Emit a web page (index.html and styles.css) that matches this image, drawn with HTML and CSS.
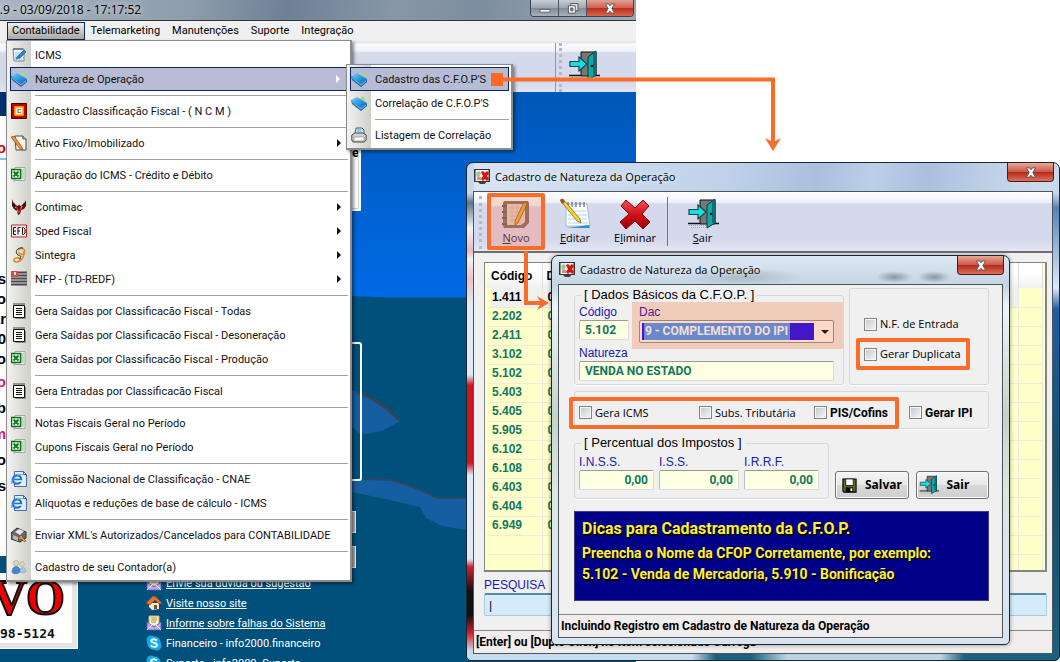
FILE: index.html
```html
<!DOCTYPE html>
<html lang="pt-BR">
<head>
<meta charset="utf-8">
<title>Cadastro de Natureza da Operação</title>
<link rel="stylesheet" href="styles.css">
</head>
<body>
<svg class="defs" aria-hidden="true">
  <defs>
    <linearGradient id="gb" x1="0" y1="0" x2="1" y2="1"><stop offset="0" stop-color="#7fd0f5"/><stop offset=".5" stop-color="#2b9be0"/><stop offset="1" stop-color="#0f5fb0"/></linearGradient>
    <linearGradient id="gr" x1="0" y1="0" x2="0" y2="1"><stop offset="0" stop-color="#f0525a"/><stop offset=".5" stop-color="#d01018"/><stop offset="1" stop-color="#a00008"/></linearGradient>
  </defs>
  <symbol id="note" viewBox="0 0 16 16"><path d="M2 2h11v12H3z" fill="#e9f6fb" stroke="#6b8a96"/><path d="M3 1v2M5 1v2M7 1v2M9 1v2M11 1v2" stroke="#446"/><path d="M4 6h6M4 8h5M4 10h5M4 12h7" stroke="#9cc8dc"/><path d="M6 10l7-7 2 2-6 6-4 1z" fill="#2f7fd0" stroke="#1a4f90" stroke-width=".6"/></symbol>
  <symbol id="book" viewBox="0 0 16 16"><path d="M9 4l2-3 3 2-1 5z" fill="#b5cf8c"/><path d="M0 5l6-3 10 6-6 5z" fill="url(#gb)"/><path d="M0 5l10 8 6-5v3l-6 5L1 9z" fill="#1769ae"/><path d="M1 7l9 7 5-4" fill="none" stroke="#cef" stroke-width=".6"/></symbol>
  <symbol id="ncm" viewBox="0 0 16 16"><path d="M.5.5h15v15H.5z" fill="#c00000" stroke="#4a0000"/><path d="M3.500 3.500h9v9h-9z" fill="#ffc21a" stroke="#ff8a00"/><path d="M5 5h6v6H5z" fill="#ececec"/><path d="M10 6.500H7v3h3" fill="none" stroke="#887" stroke-width="1.200"/></symbol>
  <symbol id="pen" viewBox="0 0 16 16"><path d="M4 1h8l3 3v11H5z" fill="#fbf6ee" stroke="#5a4636"/><path d="M12 1v3h3" fill="#d8c8b8" stroke="#5a4636"/><path d="M0 2l3-1 8 11 1 3-3-1z" fill="#e8924a" stroke="#8b4a1c" stroke-width=".7"/></symbol>
  <symbol id="xls" viewBox="0 0 16 16"><path d="M4 .5h10v13H4z" fill="#fff" stroke="#9aa89a"/><path d="M10 3h3M10 5h3M10 7h3M10 9h3M10 11h3" stroke="#7ab07a"/><path d="M.5 2.500h9v9h-9z" fill="#e9f5e9" stroke="#0b6a12" stroke-width="1.400"/><path d="M2.500 4.500l5 5M7.500 4.500l-5 5" stroke="#0b7a16" stroke-width="1.900"/><path d="M3 12v3" stroke="#9aa89a"/></symbol>
  <symbol id="bird" viewBox="0 0 16 16"><path d="M1 0l1 3 4 4 2-1 2 1 4-4 1-2v6l-2 3-3 1-1 4-2 1-1-4-3-2-2-3z" fill="#4a1010"/><path d="M4 6l3 3 1 4 1-4 3-3-1 4-3 5-2-4z" fill="#d02a20"/><path d="M6 11l1 2M10 9l1-2M4 8l1 1" stroke="#e8a040"/></symbol>
  <symbol id="efd" viewBox="0 0 16 16"><path d="M.5 2h15v12H.5z" fill="#f6eeee" stroke="#c02020"/><path d="M5 4.500H2.500v7H5M2.500 8H5M9.500 4.500H7v7M7 8h2M11.500 4.500v7h1l1.500-1.500v-4l-1.500-1.500z" fill="none" stroke="#111"/></symbol>
  <symbol id="sint" viewBox="0 0 16 16"><path d="M7 3c4-3 8-1 6 3-1 3-5 1-5-1" fill="none" stroke="#e08a2a" stroke-width="1.600"/><path d="M13 4c1 5-3 11-7 11-4 0-4-3-1-4 3-1 5 1 3 3" fill="none" stroke="#e08a2a" stroke-width="1.600"/><path d="M12 1c-5-1-8 3-6 6s5 0 3 5" fill="none" stroke="#3a2410" stroke-width="1"/></symbol>
  <symbol id="nfp" viewBox="0 0 16 16"><path d="M0 1.500h16M0 4.500h16M0 7.500h16M0 10.500h16M0 13.500h16" stroke="#4e4650" stroke-width="1.800"/><path d="M0 0h7v6H0z" fill="#d84a48"/><path d="M3 1h2v3H3z" fill="#f8dcd8"/></symbol>
  <symbol id="pad" viewBox="0 0 16 16"><path d="M2.500 2.500h11v12h-11z" fill="#fff" stroke="#111"/><path d="M14.500 4v11.500H4" fill="none" stroke="#777" stroke-width=".8"/><path d="M3 0v3M5 0v3M7 0v3M9 0v3M11 0v3M13 0v3" stroke="#222" stroke-width=".8"/><path d="M5 5.500h6M5 7.500h6M5 9.500h6M5 11.500h6" stroke="#111"/></symbol>
  <symbol id="ie" viewBox="0 0 16 16"><path d="M3.500.5h9l3 3v12h-12z" fill="#e3ecfb" stroke="#4a6ab8"/><path d="M12.500.5v3h3" fill="none" stroke="#4a6ab8"/><circle cx="6" cy="8.500" r="4.200" fill="#dff0fb" stroke="#1976c8" stroke-width="2.200"/><path d="M3 8.500h7" stroke="#1976c8" stroke-width="1.600"/><path d="M8 10h3" stroke="#e3ecfb" stroke-width="1.600"/><path d="M1 13c-3-3 8-12 11-9" fill="none" stroke="#58a6e4"/></symbol>
  <symbol id="xml" viewBox="0 0 16 16"><path d="M0 6l6-5 9 4v6l-6 4-9-3z" fill="#6a6a6e" stroke="#303034"/><path d="M4 5l4-3 5 2-4 4z" fill="#e6e6ea"/><path d="M2 8l5 2v4l-5-2z" fill="#b8b8c0"/><path d="M9 9l2-1 1 3 3 3-1 1-4-3-3 1z" fill="#e8a03a" stroke="#5a3a10" stroke-width=".5"/></symbol>
  <symbol id="users" viewBox="0 0 16 16"><circle cx="5" cy="4" r="2.800" fill="#d8d8c0" stroke="#a0a088" stroke-width=".5"/><circle cx="11" cy="5" r="2.500" fill="#d8d8c0" stroke="#a0a088" stroke-width=".5"/><path d="M8 13c0-5 7-6 7-1 0 2-4 2-7 1z" fill="#a8c8e8" stroke="#6a92ba" stroke-width=".5"/><path d="M1 13c0-7 8-7 8-1 0 3-7 4-8 1z" fill="#4a86c8" stroke="#2f62a0" stroke-width=".5"/></symbol>
  <symbol id="print" viewBox="0 0 16 16"><path d="M4 7l1-6h6l2 2v4" fill="#d8ecfa" stroke="#49606e"/><path d="M.8 8l3-2h8l3.400 2v5l-2 2H2l-1.200-2z" fill="#d2d2d2" stroke="#4a4a4a"/><path d="M3 10h10v4H3z" fill="#fff" stroke="#777" stroke-width=".6"/><path d="M6 3h4M6 5h5" stroke="#5aa0cc"/></symbol>
  <symbol id="door" viewBox="0 0 32 32"><path d="M13 2h15v24H13z" fill="#777" stroke="#111"/><path d="M1 25.500h12M28 25.500h4" stroke="#111" stroke-width="1.500"/><path d="M2 27.500h24M4 29.500h18" stroke="#aaa" stroke-dasharray="1 1"/><path d="M20 7l8-6v24l-8 5z" fill="#12a8a8" stroke="#053f3f"/><path d="M26 3v22" stroke="#0b7070" stroke-width="2"/><circle cx="24" cy="16" r="1.300" fill="#000"/><path d="M2 11.500h9V7l8 7-8 7v-4.500H2z" fill="#20dce0" stroke="#064a4a" stroke-width="1.200"/></symbol>
  <symbol id="notebook" viewBox="0 0 32 32"><path d="M4 3h24l1 2v20l-5 5H4l-1-2V5z" fill="#9a6f60"/><path d="M7 6h18v18l-4 3H7z" fill="#e8b9a4"/><path d="M9 10h13M9 14h13M9 18h11M9 22h9M12 7v18M17 7v18" stroke="#d8a892"/><path d="M2 8h5M2 14h5M2 20h5M2 26h5" stroke="#8a6050" stroke-width="2"/><path d="M24 4l3 2-9 19-3 2v-4z" fill="#f09a3a" stroke="#a0602a" stroke-width=".8"/></symbol>
  <symbol id="edit" viewBox="0 0 32 32"><path d="M7 6h21l3 22H7z" fill="#f8fbff" stroke="#a9bdd4"/><path d="M9 4v5M13 4v5M17 4v5M21 4v5M25 4v5" stroke="#555" stroke-width="1"/><path d="M9 13h18M9 17h19M9 21h19M9 25h20" stroke="#bcd6ee"/><path d="M8 30h23l-1-3z" fill="#2f8ed0"/><path d="M1 2l3-1 17 20 1 4-4-2z" fill="#f6d23a" stroke="#8a6a10" stroke-width=".8"/><path d="M1 2l3-1 2 3-3 2z" fill="#a05030"/></symbol>
  <symbol id="kill" viewBox="0 0 32 32"><path d="M7 2l9 8 8-8 6 6-7 8 8 8-7 7-8-8-9 8-6-7 9-8-8-8z" fill="url(#gr)" stroke="#8a0008" stroke-linejoin="round"/></symbol>
  <symbol id="app" viewBox="0 0 16 16"><path d="M0 0h16v13H0z" fill="#333"/><path d="M1.500 1h13v11h-13z" fill="#f3f3ee"/><path d="M2 4l3-2 2 2-2 5H3z" fill="#9cc89c"/><path d="M3 8h4v3H3z" fill="#e08a8a"/><path d="M7 3l2-1 2 2 2-2 2 2-2 3 2 3-2 2-2-2-2 2-2-2 2-3z" fill="#d81010"/><path d="M4 13h8l-1 2H6z" fill="#444"/></symbol>
  <symbol id="disk" viewBox="0 0 16 16"><path d="M1 1h14v14H2l-1-1z" fill="#6b6b20" stroke="#000" stroke-width="1.200"/><path d="M4 1h8v7H4z" fill="#fff" stroke="#000" stroke-width=".8"/><path d="M4 10h8v5H4z" fill="#000"/><path d="M9 11h2v3H9z" fill="#fff"/></symbol>
  <symbol id="mail" viewBox="0 0 16 16"><path d="M3 1h10v10H3z" fill="#fff7cc" stroke="#c8b060"/><path d="M5 3h6M5 5h6M5 7h5" stroke="#a09050"/><path d="M1 7l7 5 7-5v8H1z" fill="#b9a9ee" stroke="#6a58b8" stroke-width=".8"/><path d="M1 15l5-5M15 15l-5-5" stroke="#eee6ff"/></symbol>
  <symbol id="home" viewBox="0 0 16 16"><path d="M3 8h10v6l-7 1-3-3z" fill="#f6ead0"/><path d="M0 8l7-7 3 1 6 6-3 1-4-4-5 5z" fill="#e8702a" stroke="#a03c10" stroke-width=".5"/><path d="M8 10h3v4H8z" fill="#8a4a28"/></symbol>
  <symbol id="skype" viewBox="0 0 16 16"><circle cx="5" cy="5" r="4.500" fill="#0aa6e4"/><circle cx="11" cy="11" r="4.500" fill="#0aa6e4"/><circle cx="8" cy="8" r="6.800" fill="#12aeea"/><path d="M11 5.500C9 3.500 5 4 5.200 6.200 5.400 8.500 11 7.500 11 10c0 2.300-4.500 2.500-6.200.3" fill="none" stroke="#fff" stroke-width="1.800"/></symbol>
  <symbol id="arrow" viewBox="0 0 4 8"><path d="M0 0l4 4-4 4z" fill="currentColor"/></symbol>
</svg>

<main class="desktop">
  <section class="erp">
    <header class="erp-title"><span>3.9 - 03/09/2018 - 17:17:52</span>
      <div class="caption">
        <button class="cap cap-min" aria-label="Minimizar"><svg viewBox="0 0 12 12"><path d="M.5 7h11v3H.5z" fill="#fff" stroke="#555"/></svg></button>
        <button class="cap" aria-label="Restaurar"><svg viewBox="0 0 12 12"><path d="M3.500.5h8v8h-8z" fill="#ddd" stroke="#555"/><path d="M1 3h7.500v8H1z" fill="#fff" stroke="#555"/><path d="M3.500 5.500h2.500v3H3.500z" fill="#888" stroke="#555"/></svg></button>
        <button class="cap cap-close" aria-label="Fechar"><svg viewBox="0 0 12 12"><path d="M1 1h3.500L6 3l1.500-2H11L8 6l3 5H7.500L6 9l-1.500 2H1l3-5z" fill="#fff" stroke="#555"/></svg></button>
      </div>
    </header>
    <nav class="menubar">
      <button class="open">Contabilidade</button><button>Telemarketing</button><button>Manutenções</button><button>Suporte</button><button>Integração</button>
    </nav>
    <div class="erp-tools"><button class="exit" aria-label="Sair"><svg><use href="#door"/></svg></button></div>
    <div class="wall">
      <svg class="land" viewBox="0 0 290 300" preserveAspectRatio="none"><path d="M0 0q60 2 114 6h176v294H0z" fill="#00507c"/><path d="M0 94l20 8 14 10 14 13-16 9-16 4-9-1-7-6z" fill="#165ea2"/><path d="M4 96l14 5 16 11 13 12" fill="none" stroke="#37444e" stroke-width="3"/><path d="M0 184l42 0 24 9 20 9h34v33l-30-5-16-8-6-11-30-7-38-8z" fill="#165ea2"/><path d="M14 183l26 1 24 8 22 10h34" fill="none" stroke="#2c4860" stroke-width="2"/></svg>
      <div class="sheet"></div>
      <div class="panel-a">e</div>
      <div class="panel-b"></div>
      <div class="stub stub-1"></div><div class="stub stub-2"></div>
      <div class="scraps"><b class="red">o</b><i></i><b>as</b><b>o</b><b>ar</b><b>40</b><b>o</b><b class="pink">lo</b><b>ub</b><b class="pink">m</b><b>o</b><b>s</b></div>
      <div class="brand"><strong>VO</strong><span>98-5124</span></div>
      <ul class="links">
        <li><svg><use href="#mail"/></svg><a href="#">Envie sua dúvida ou sugestão</a></li>
        <li><svg><use href="#home"/></svg><a href="#">Visite nosso site</a></li>
        <li><svg><use href="#mail"/></svg><a href="#">Informe sobre falhas do Sistema</a></li>
        <li><svg><use href="#skype"/></svg><span>Financeiro - info2000.financeiro</span></li>
        <li><svg><use href="#skype"/></svg><span>Suporte - info2000. Suporte</span></li>
      </ul>
    </div>
  </section>

  <div class="menu menu-main">
    <button><svg><use href="#note"/></svg>ICMS</button>
    <button class="hot"><svg><use href="#book"/></svg>Natureza de Operação<svg class="more"><use href="#arrow"/></svg></button>
    <hr>
    <button><svg><use href="#ncm"/></svg>Cadastro Classificação Fiscal - ( N C M )</button>
    <hr>
    <button><svg><use href="#pen"/></svg>Ativo Fixo/Imobilizado<svg class="more"><use href="#arrow"/></svg></button>
    <hr>
    <button><svg><use href="#xls"/></svg>Apuração do ICMS - Crédito e Débito</button>
    <hr>
    <button><svg><use href="#bird"/></svg>Contimac<svg class="more"><use href="#arrow"/></svg></button>
    <button><svg><use href="#efd"/></svg>Sped Fiscal<svg class="more"><use href="#arrow"/></svg></button>
    <button><svg><use href="#sint"/></svg>Sintegra<svg class="more"><use href="#arrow"/></svg></button>
    <button><svg><use href="#nfp"/></svg>NFP - (TD-REDF)<svg class="more"><use href="#arrow"/></svg></button>
    <hr>
    <button><svg><use href="#pad"/></svg>Gera Saídas por Classificacão Fiscal - Todas</button>
    <button><svg><use href="#pad"/></svg>Gera Saídas por Classificacão Fiscal - Desoneração</button>
    <button><svg><use href="#xls"/></svg>Gera Saídas por Classificacão Fiscal - Produção</button>
    <hr>
    <button><svg><use href="#pad"/></svg>Gera Entradas por Classificacão Fiscal</button>
    <hr>
    <button><svg><use href="#xls"/></svg>Notas Fiscais Geral no Período</button>
    <button><svg><use href="#xls"/></svg>Cupons Fiscais Geral no Período</button>
    <hr>
    <button><svg><use href="#ie"/></svg>Comissão Nacional de Classificação - CNAE</button>
    <button><svg><use href="#ie"/></svg>Alíquotas e reduções de base de cálculo - ICMS</button>
    <hr>
    <button><svg><use href="#xml"/></svg>Enviar XML's Autorizados/Cancelados para CONTABILIDADE</button>
    <hr>
    <button><svg><use href="#users"/></svg>Cadastro de seu Contador(a)</button>
  </div>
  <div class="menu menu-sub">
    <button class="hot"><svg><use href="#book"/></svg>Cadastro das C.F.O.P'S</button>
    <button><svg><use href="#book"/></svg>Correlação de C.F.O.P'S</button>
    <hr>
    <button><svg><use href="#print"/></svg>Listagem de Correlação</button>
  </div>

  <section class="win win-list">
    <header class="win-title"><svg><use href="#app"/></svg><h2>Cadastro de Natureza da Operação</h2><button class="x" aria-label="Fechar"><svg viewBox="0 0 12 12"><path d="M1 1h3.500L6 3l1.500-2H11L8 6l3 5H7.500L6 9l-1.500 2H1l3-5z" fill="#fff" stroke="#555"/></svg></button></header>
    <div class="client">
      <div class="tools">
        <button class="marked"><svg><use href="#notebook"/></svg><span><u>N</u>ovo</span></button>
        <button><svg><use href="#edit"/></svg><span><u>E</u>ditar</span></button>
        <button><svg><use href="#kill"/></svg><span>E<u>l</u>iminar</span></button>
        <button class="split"><svg><use href="#door"/></svg><span><u>S</u>air</span></button>
      </div>
      <div class="list-body">
        <div class="grid">
          <table>
            <colgroup><col class="c-code"><col><col class="c-end"></colgroup>
            <thead><tr><th>Código</th><th>D</th><th></th></tr></thead>
            <tbody>
              <tr class="sel"><td>1.411</td><td>0</td><td></td></tr>
              <tr><td>2.202</td><td>0</td><td></td></tr>
              <tr><td>2.411</td><td>0</td><td></td></tr>
              <tr><td>3.102</td><td>0</td><td></td></tr>
              <tr><td>5.102</td><td>0</td><td></td></tr>
              <tr><td>5.403</td><td>0</td><td></td></tr>
              <tr><td>5.405</td><td>0</td><td></td></tr>
              <tr><td>5.905</td><td>0</td><td></td></tr>
              <tr><td>6.102</td><td>0</td><td></td></tr>
              <tr><td>6.108</td><td>0</td><td></td></tr>
              <tr><td>6.403</td><td>0</td><td></td></tr>
              <tr><td>6.404</td><td>0</td><td></td></tr>
              <tr><td>6.949</td><td>0</td><td></td></tr>
              <tr><td></td><td></td><td></td></tr>
              <tr><td></td><td></td><td></td></tr>
            </tbody>
          </table>
        </div>
        <label class="lbl" for="q">PESQUISA</label>
        <input id="q" class="search" type="text" value="|">
      </div>
      <footer class="status">[Enter] ou [Duplo Click] no Item selecionado Carrega</footer>
    </div>
  </section>

  <section class="win win-form">
    <header class="win-title"><svg><use href="#app"/></svg><h2>Cadastro de Natureza da Operação</h2><button class="x" aria-label="Fechar"><svg viewBox="0 0 12 12"><path d="M1 1h3.500L6 3l1.500-2H11L8 6l3 5H7.500L6 9l-1.500 2H1l3-5z" fill="#fff" stroke="#555"/></svg></button></header>
    <form class="client">
      <div class="form-body">
        <div class="row">
          <fieldset class="basic">
            <legend>[ Dados Básicos da C.F.O.P. ]</legend>
            <div class="pair">
              <div class="field code"><label class="lbl" for="cod">Código</label><input id="cod" type="text" value="5.102"></div>
              <div class="field dac"><label class="lbl" for="dac">Dac</label><div class="combo"><select id="dac"><option>9 - COMPLEMENTO DO IPI</option></select></div></div>
            </div>
            <div class="field nat"><label class="lbl" for="nat">Natureza</label><input id="nat" type="text" value="VENDA NO ESTADO"></div>
          </fieldset>
          <div class="box flags">
            <label class="chk"><input type="checkbox">N.F. de Entrada</label>
            <label class="chk marked"><input type="checkbox">Gerar Duplicata</label>
          </div>
        </div>
        <div class="box taxes">
          <div class="marked">
            <label class="chk"><input type="checkbox">Gera ICMS</label>
            <label class="chk"><input type="checkbox">Subs. Tributária</label>
            <label class="chk strong"><input type="checkbox">PIS/Cofins</label>
          </div>
          <label class="chk strong"><input type="checkbox">Gerar IPI</label>
        </div>
        <div class="row">
          <fieldset class="perc">
            <legend>[ Percentual dos Impostos ]</legend>
            <div class="field"><label class="lbl" for="inss">I.N.S.S.</label><input id="inss" class="num" type="text" value="0,00"></div>
            <div class="field"><label class="lbl" for="iss">I.S.S.</label><input id="iss" class="num" type="text" value="0,00"></div>
            <div class="field"><label class="lbl" for="irrf">I.R.R.F.</label><input id="irrf" class="num" type="text" value="0,00"></div>
          </fieldset>
          <div class="actions">
            <button type="button"><svg><use href="#disk"/></svg>Salvar</button>
            <button type="button"><svg class="wide"><use href="#door"/></svg>Sair</button>
          </div>
        </div>
        <aside class="tips">
          <h3>Dicas para Cadastramento da C.F.O.P.</h3>
          <p>Preencha o Nome da CFOP Corretamente, por exemplo:</p>
          <p>5.102 - Venda de Mercadoria, 5.910 - Bonificação</p>
        </aside>
      </div>
      <footer class="status">Incluindo Registro em Cadastro de Natureza da Operação</footer>
    </form>
  </section>

  <svg class="callout callout-top" viewBox="0 0 290 80"><path d="M6 8.500H282V72" fill="none" stroke="#f96d2b" stroke-width="4"/><path d="M0 2h12v13H0z" fill="#ff6a22"/><path d="M274 67l8 4 8-4-8 13z" fill="#f96d2b"/></svg>
  <svg class="callout callout-new" viewBox="0 0 30 56"><path d="M4 0V52H20" fill="none" stroke="#f96d2b" stroke-width="4"/><path d="M15 45l12 7-12 7 4-7z" fill="#f96d2b"/></svg>
</main>
</body>
</html>
```
FILE: styles.css
```css
* { box-sizing: border-box; }
body { margin: 0; background: #fff; font-family: Roboto, "Liberation Sans", sans-serif; font-size: 11px; color: #000; }
button, input, select { font: inherit; color: inherit; margin: 0; }
button { background: none; border: 0; padding: 0; text-align: left; }
.defs { position: absolute; width: 0; height: 0; }
.desktop { position: relative; min-height: 100vh; overflow: hidden; }

/* main application */
.erp { width: 60%; height: 100vh; display: flex; flex-direction: column; overflow: hidden; }
.erp-title { height: 21px; flex: none; display: flex; justify-content: space-between; align-items: flex-start; border-bottom: 1px solid #333; background: linear-gradient(100deg, #a9b4c0 0, #8d9dac 30%, #6d8196 45%, #8797a8 62%, #7d8ea0 75%, #9aa8b6 100%); font: 12px/19px "Open Sans", sans-serif; }
.erp-title span { margin-left: -7px; text-shadow: 0 0 6px #fff; }
.caption { display: flex; margin-right: 2px; border: 1px solid #3d4650; border-top: 0; border-radius: 0 0 4px 4px; overflow: hidden; }
.cap { width: 28px; height: 16px; display: grid; place-items: center; border-right: 1px solid #4c5560; background: linear-gradient(#c8cfd6, #9aa5b0 50%, #7f8c98 51%, #a5b0ba); }
.cap svg, .x svg { width: 12px; height: 11px; }
.cap-close { width: 46px; border: 0; background: linear-gradient(#e3a294, #cf6250 48%, #b92c18 50%, #d8644c); }
.menubar { height: 20px; flex: none; display: flex; background: #f0f0f0; padding-left: 7px; }
.menubar button { height: 18px; line-height: 18px; margin: 1px 4px 0 0; padding: 0 4px; }
.menubar .open { border: 1px solid #0a246a; line-height: 16px; margin-right: 2px; background: linear-gradient(#f0efec, #aaa89c); }
.erp-tools { height: 51px; flex: none; padding: 2px 36px 0 0; display: flex; justify-content: flex-end; background: linear-gradient(#e8e8e8 0 2px, #fafbff 3px, #f0f2fa 10px, #d4d9ec 12px, #d4d9ec 80%, #e0e4f4); }
.exit { border-left: 1px solid #999; padding-left: 9px; display: flex; align-items: center; }
.exit::before { content: ""; height: 100%; border-left: 3px dotted #b4b8c8; margin: 0 6px 0 -6px; }
.exit svg { width: 32px; height: 32px; margin-bottom: 4px; }
.wall { position: relative; flex: 1; overflow: hidden; background: linear-gradient(#0058b8, #006ae6 205px, #00507c 206px); }
.land { position: absolute; left: 352px; top: 204px; width: 290px; height: 300px; }
.sheet { position: absolute; left: 0; top: 0; width: 7px; height: 464px; background: linear-gradient(#003070 24px, #fff 24px); }
.panel-a { position: absolute; left: 340px; top: 50px; width: 21px; height: 69px; padding-left: 10px; background: #fff; border: 2px solid #fff; outline: 1px solid #bdd4e8; outline-offset: -3px; font-size: 13px; font-weight: bold; line-height: 18px; }
.panel-b { position: absolute; left: 300px; top: 250px; width: 62px; height: 139px; border: 2px solid #fff; border-radius: 3px; }
.stub { position: absolute; left: 340px; width: 16px; height: 22px; background: #b4b4b4; border: 1px solid #eee; }
.stub-1 { top: 419px; }
.stub-2 { top: 454px; }
.scraps { position: absolute; left: 0; top: 46px; width: 6px; display: flex; flex-direction: column; align-items: flex-end; font: 15px/20px "Liberation Sans", sans-serif; overflow: hidden; }
.scraps i { width: 6px; height: 111px; border-top: 2px solid #7ac4f0; }
.scraps .red { color: #e00000; }
.scraps .pink { color: #d0207c; }
.scraps b:nth-child(n+8) { line-height: 26px; }
.brand { position: absolute; left: 0; top: 482px; width: 77px; height: 74px; background: #fff; border: solid #e4e4e4; border-width: 0 5px 5px 0; outline: 1px solid #fff; font-family: "DejaVu Sans Mono", monospace; }
.brand strong { display: block; margin-left: -9px; font: bold 50px/46px "Liberation Serif", serif; color: #f00000; -webkit-text-stroke: 2px #111; }
.brand span { display: block; font-size: 13px; font-weight: bold; line-height: 28px; color: #111; }
.links { position: absolute; left: 146px; top: 481px; margin: 0; padding: 0; list-style: none; color: #fff; }
.links li { display: flex; align-items: center; gap: 4px; height: 20px; white-space: nowrap; }
.links svg { width: 16px; height: 16px; }
.links a { color: #fff; }

/* drop-down menus */
.menu { position: absolute; display: flex; flex-direction: column; border: 1px solid #8c8c8c; border-width: 1px 2px 2px 1px; background: linear-gradient(90deg, #f2f2f0, #cfd0c8 24px, #fff 24px); padding: 2px 2px 1px; box-shadow: 2px 2px 3px rgba(0, 0, 0, .45); }
.menu-main { left: 6px; top: 40px; width: 346px; }
.menu-sub { left: 346px; top: 64px; width: 167px; }
.menu button { display: flex; align-items: center; height: 24px; padding: 0 0 0 2px; white-space: nowrap; color: #111; }
.menu button > svg:first-child { width: 16px; height: 16px; margin-right: 8px; flex: none; }
.menu .hot { background: #b5bcd4; border: 1px solid #0a246a; margin-left: 1px; padding-left: 0; }
.menu hr { width: auto; height: 1px; margin: 4px 0 3px 26px; border: 0; background: #a2a2a2; }
.menu .more { width: 4px; height: 8px; margin: 0 7px 0 auto; }
.menu .hot .more { color: #fff; }

/* glass windows */
.win { position: absolute; border: 1px solid #1c2630; border-radius: 7px 7px 5px 5px; padding: 0 6px 6px; display: flex; flex-direction: column; }
.win-list { left: 466px; right: 0; top: 162px; bottom: 1px; background:
  linear-gradient(#c8d8ec 30px, #5c7490 40px, #eef4fb 65px, #e8b8c0 88px, #eef4fb 96px, #e8c0c8 116px, #dceafa 140px, #dceafa 212px, #c81820 222px, #c81820 300px, #dceafa 312px, #dceafa 396px, #d02028 404px, #101014 428px, #101014 452px, #d02028 470px, #c8dcf0 488px) left / 7px 100% no-repeat,
  linear-gradient(#c8d8ec 30px, #5484b8 45px, #dceafa 125px, #1a60a8 146px, #10506c 300px, #1a6080) right / 7px 100% no-repeat,
  linear-gradient(90deg, #c8dcf0 38%, #1a6080 42% 48%, #b8d4e4 54% 80%, #1a6080 84%) bottom / 100% 7px no-repeat,
  linear-gradient(100deg, #d8e4f4 0, #c0d2ea 38%, #a8c0de 52%, #bccfe8 60%, #a9c0de 68%, #c8d8ec 82%, #d4dfee 100%); }
.win-title { display: flex; align-items: center; height: 28px; flex: none; }
.win-title > svg { width: 16px; height: 16px; margin: 0 5px 0 1px; }
.win-title h2 { margin: 0; font: 11px/18px "Open Sans", sans-serif; text-shadow: 0 0 6px #fff; white-space: nowrap; }
.x { width: 47px; height: 19px; align-self: flex-start; margin: 0 -1px 0 auto; display: grid; place-items: center; border: 1px solid #4a1c18; border-top: 0; border-radius: 0 0 4px 4px; background: linear-gradient(#e8a898, #cc5a48 48%, #b02818 50%, #e0705c); }
.client { flex: 1; display: flex; flex-direction: column; border: 1px solid #4c545c; background: #f0f0f0; margin: 0; min-height: 0; }
.tools { height: 61px; flex: none; display: flex; padding: 1px 0 1px 14px; border-bottom: 2px solid #6e6e6e; background: linear-gradient(#fff, #f0f2fa 10px, #d4d9ec 12px, #d4d9ec 80%, #e2e6f5); }
.tools::before { content: ""; margin: 3px 5px 1px -9px; border-left: 3px dotted #b4b8c8; }
.tools button { width: 60px; display: flex; flex-direction: column; align-items: center; justify-content: center; font: 11px/16px "Open Sans", sans-serif; }
.tools svg { width: 32px; height: 32px; }
.marked { border: 4px solid #f96d2b; border-radius: 2px; }
.tools .marked { width: 58px; background: linear-gradient(#f8d8cc 8px, #e2bcc0 10px); color: #5a3540; }
.tools .split { width: 70px; border-left: 1px solid #777; margin: 4px 0 4px 2px; }
.list-body { flex: 1; display: flex; flex-direction: column; align-items: stretch; padding: 9px 5px 14px 10px; min-height: 0; }
.grid { height: 310px; flex: none; overflow: hidden; border: 1px solid #848484; border-width: 1px 2px 2px 1px; background: #ffffca; padding: 0 2px; }
.grid table { width: 100%; table-layout: fixed; border-collapse: collapse; font: bold 12px "Liberation Sans", sans-serif; color: #107860; }
.c-code { width: 55px; }
.c-end { width: 24px; }
.grid th { height: 25px; padding: 0 4px; text-align: left; color: #000; background: linear-gradient(#fff 40%, #f0f0f0); border-right: 1px solid #ddd; white-space: nowrap; }
.grid td { height: 19px; padding: 0 5px; line-height: 17px; border: solid #ececdc; border-width: 0 1px 1px 0; }
.grid .sel td { background: #f0f0ee; color: #000; }
.grid .sel td:first-child { background: linear-gradient(90deg, #ffffca 4px, #f0f0ee 4px); }
.grid .sel td:last-child { background: #ffffca; }
.lbl { color: #1818b4; font: 12px/14px "Liberation Sans", sans-serif; }
.list-body .lbl { margin: 6px 0 1px; }
.search { height: 23px; background: #d4ecfa; border: 1px solid #a8c8dc; border-top: 2px solid #5888a0; border-radius: 2px; padding: 0 4px; font-size: 13px; }
.status { height: 23px; flex: none; padding-left: 2px; border-top: 1px solid #888; background: #f1edec; font-size: 12px; font-weight: bold; line-height: 22px; white-space: nowrap; overflow: hidden; }

/* form window */
.win-form { left: 551px; right: 50px; top: 255px; background:
  radial-gradient(ellipse 18px 6px at 342px 21px, #8a969e, transparent),
  radial-gradient(ellipse 16px 6px at 382px 21px, #8a969e, transparent),
  radial-gradient(ellipse 60px 9px at 190px 21px, #a8b8c4, transparent),
  linear-gradient(#dce8f2, #c4d4e4 30px, #eef4f8 50px, #c4d4c8 160px, #dce6dc 230px, #d8e4f0 300px); box-shadow: 0 0 4px rgba(0, 0, 0, .4); }
.form-body { padding: 3px 13px 13px 15px; display: flex; flex-direction: column; }
.row { display: flex; align-items: stretch; }
fieldset { margin: 0; padding: 0; border: 1px solid #d2d8dc; border-radius: 3px; min-width: 0; box-shadow: 0 1px #fff; }
legend { margin-left: 2px; padding: 0 3px; font: 13px/14px "Liberation Sans", sans-serif; }
.basic { flex: 1; padding-left: 4px; padding-bottom: 3px; }
.pair { display: flex; justify-content: space-between; }
.field { display: flex; flex-direction: column; }
.field .lbl { line-height: 16px; }
.field input { width: 100%; height: 20px; background: #ffffe1; border: 1px solid #dcdcdc; border-top-color: #999; border-left-color: #bbb; border-radius: 2px; padding: 0 5px; font-size: 12px; font-weight: bold; color: #107860; }
.code { width: 50px; padding-top: 2px; }
.dac { width: 211px; padding: 2px 9px 6px 7px; background: #f2ccba; }
.dac .lbl { color: #501890; }
.combo { position: relative; }
.combo select { appearance: none; width: 100%; height: 23px; padding: 0 0 2px 5px; border: 1px solid #a08478; border-radius: 2px; color: #f6dcd8; font-size: 12px; font-weight: bold; background: linear-gradient(#688acc, #688acc) 4px 2px / 146px 17px no-repeat, linear-gradient(#4018c8, #4018c8) 2px 2px / 172px 17px no-repeat, #ffd8c8; }
.combo::after { content: ""; position: absolute; right: 5px; top: 10px; border: 4px solid transparent; border-top-color: #401008; border-bottom: 0; }
.nat { margin-top: -4px; width: 255px; }
.box { border: 1px solid #d2d8dc; border-radius: 3px; box-shadow: 0 1px #fff; }
.flags { width: 140px; margin-left: 5px; padding: 23px 0 0 6px; display: flex; flex-direction: column; align-items: flex-start; }
.chk { display: flex; align-items: center; gap: 3px; font: 11px/16px "Open Sans", sans-serif; white-space: nowrap; }
.chk input { appearance: none; width: 13px; height: 13px; flex: none; border: 1px solid #848484; outline: 1px solid #f6f6f6; outline-offset: -2px; background: linear-gradient(135deg, #c4c8cc, #f6f6f6); }
.flags .chk { height: 24px; padding-left: 8px; }
.flags .marked { height: 32px; padding: 0 5px 0 4px; margin-top: 2px; }
.chk.strong { font: bold 12px/16px Roboto, sans-serif; }
.taxes { margin-top: 6px; height: 38px; display: flex; align-items: center; padding-top: 5px; }
.taxes .marked { margin-left: -6px; width: 330px; height: 32px; display: grid; grid-template-columns: 120px 115px 1fr; align-items: center; padding-left: 6px; margin-right: 10px; }
.taxes + .row { margin-top: 7px; }
.perc { width: 255px; display: grid; grid-template-columns: 75px 80px 75px; gap: 5px; padding: 4px 0 8px 4px; }
.perc .num { text-align: right; height: 20px; }
.actions { flex: 1; display: flex; gap: 7px; padding: 35px 0 0 6px; align-items: flex-start; }
.actions button { flex: 1; height: 28px; display: flex; align-items: center; gap: 8px; padding-left: 6px; border: 1px solid #707070; border-radius: 3px; background: linear-gradient(#f4f4f4, #e8e8e8 48%, #d8d8d8 50%, #cfcfcf); box-shadow: inset 0 0 0 1px #fafafa; font: bold 12px/16px "Noto Sans", sans-serif; }
.actions svg { width: 15px; height: 15px; }
.actions .wide { width: 20px; height: 20px; margin-left: -4px; }
.tips { margin-top: 12px; height: 90px; border: 1px solid #404070; background: #000088; color: #ffee30; padding: 7px; font-size: 14px; font-weight: bold; text-shadow: 1px 2px 1px #000; white-space: nowrap; }
.tips h3 { margin: 0 0 4px; font-size: 16px; line-height: 20px; }
.tips p { margin: 0; line-height: 21px; }

/* callout arrows */
.callout { position: absolute; overflow: visible; pointer-events: none; }
.callout-top { left: 491px; top: 71px; width: 290px; height: 80px; }
.callout-new { left: 522px; top: 251px; width: 30px; height: 56px; }
```
